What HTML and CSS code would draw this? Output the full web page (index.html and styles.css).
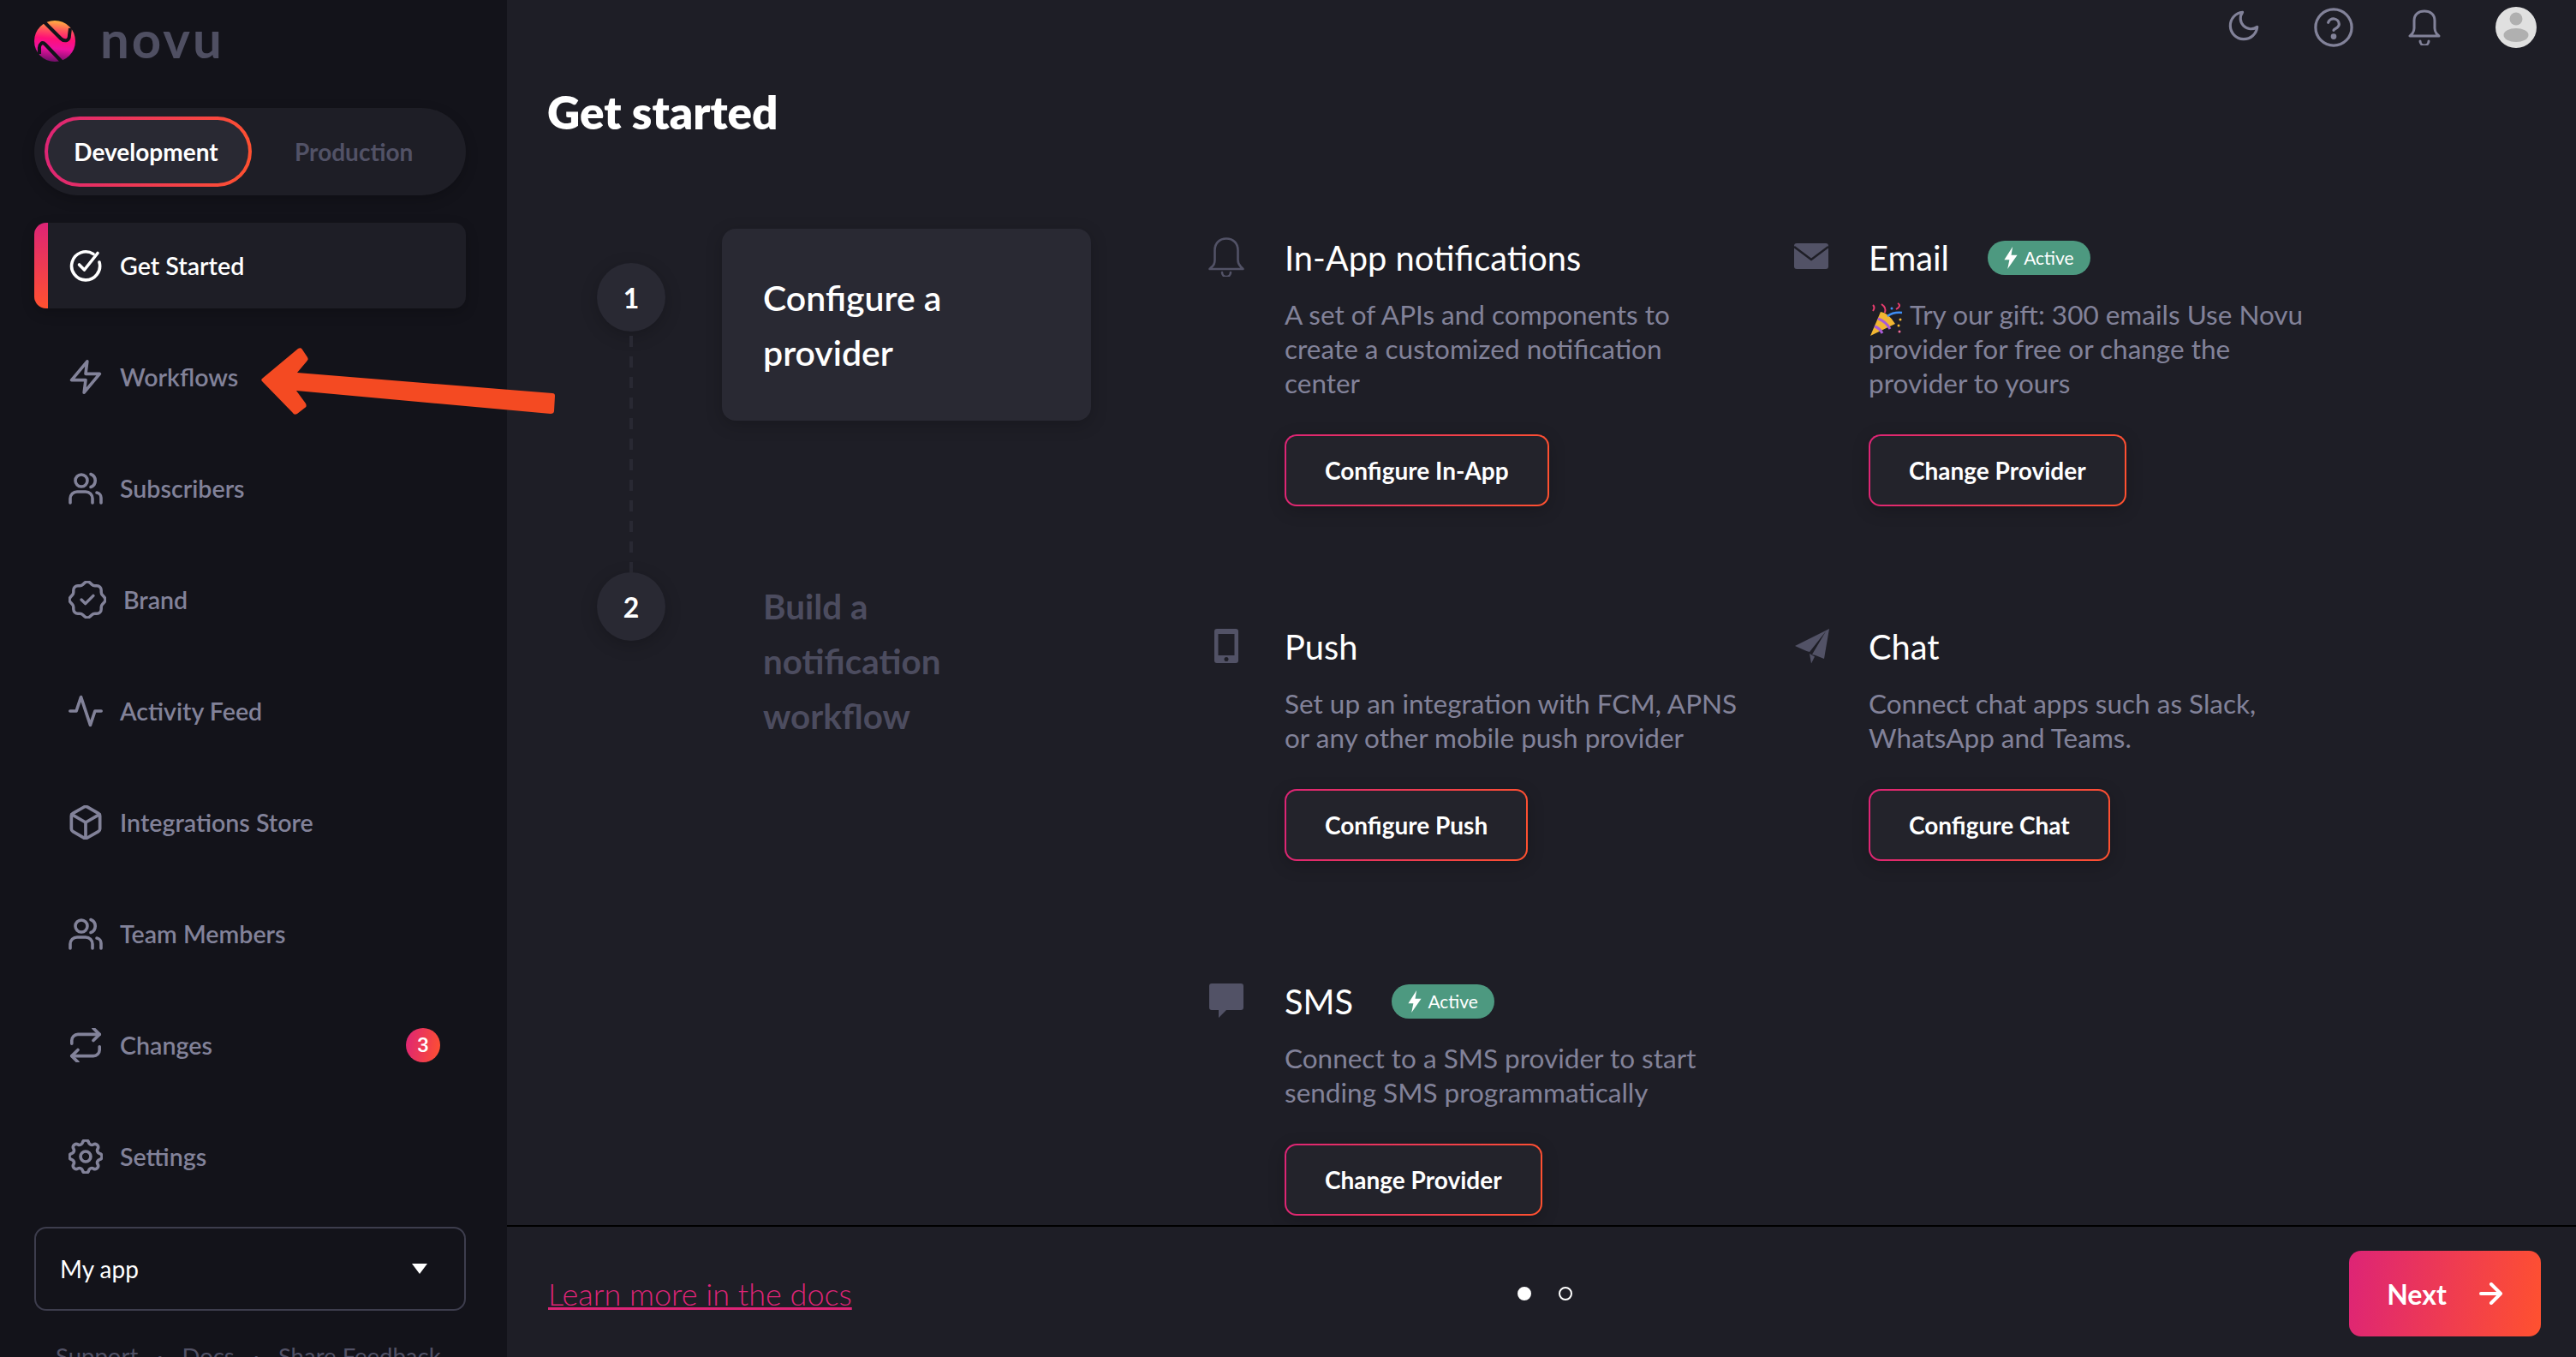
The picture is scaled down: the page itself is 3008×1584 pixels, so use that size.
FILE: index.html
```html
<!DOCTYPE html>
<html lang="en">
<head>
<meta charset="utf-8">
<title>Novu - Get started</title>
<link rel="stylesheet" href="styles.css">
</head>
<body>
<div class="app">
  <aside class="sidebar">
    <div class="brand">
      <svg class="logo" viewBox="0 0 48 48">
        <defs>
          <linearGradient id="lg" x1="0.55" y1="0" x2="0.45" y2="1">
            <stop offset="0" stop-color="#ffb33f"/><stop offset="0.22" stop-color="#ff5a5a"/><stop offset="0.45" stop-color="#ff0f78"/><stop offset="0.68" stop-color="#ee12a0"/><stop offset="1" stop-color="#6f0f68"/>
          </linearGradient>
        </defs>
        <circle cx="24" cy="24" r="24" fill="url(#lg)"/>
        <path d="M11 1L31 21Q34 24 38 23Q41 22 41 17L42 9" stroke="#13131a" stroke-width="4" fill="none"/>
        <path d="M32 48L13 28Q10 25 8 27Q5.500 29 6 33L6 39" stroke="#13131a" stroke-width="4" fill="none"/>
      </svg>
      <span class="wordmark">novu</span>
    </div>
    <div class="toggle">
      <span class="toggle-on">Development</span>
      <span class="toggle-off">Production</span>
    </div>
    <nav class="nav">
      <a class="nav-item current">
        <svg class="ic thick" viewBox="0 0 40 40"><path d="M29 6.500A16.500 16.500 0 1 0 36 16"/><path d="M12.500 19l6 6L34 5.500"/></svg>
        <span>Get Started</span>
      </a>
      <a class="nav-item">
        <svg class="ic" viewBox="1 1 22 22"><polygon points="13 2 3 14 12 14 11 22 21 10 12 10 13 2"/></svg>
        <span>Workflows</span>
      </a>
      <a class="nav-item">
        <svg class="ic thick" viewBox="0 0 40 40"><circle cx="15" cy="11" r="7"/><path d="M26 3.500a8 8 0 0 1 0 15"/><path d="M2 37v-5a8 8 0 0 1 8-8h10a8 8 0 0 1 8 8v5"/><path d="M33 25a6 6 0 0 1 5 6v6"/></svg>
        <span>Subscribers</span>
      </a>
      <a class="nav-item wide">
        <svg class="ic" viewBox="2.500 2.500 19 19"><path d="M5 7.200a2.200 2.200 0 0 1 2.200 -2.200h1a2.200 2.200 0 0 0 1.550 -.64l.7 -.7a2.200 2.200 0 0 1 3.100 0l.7 .7c.412 .41 .97 .64 1.550 .64h1a2.200 2.200 0 0 1 2.200 2.200v1c0 .58 .23 1.138 .64 1.550l.7 .7a2.200 2.200 0 0 1 0 3.100l-.7 .7a2.200 2.200 0 0 0 -.64 1.550v1a2.200 2.200 0 0 1 -2.200 2.200h-1a2.200 2.200 0 0 0 -1.550 .64l-.7 .7a2.200 2.200 0 0 1 -3.100 0l-.7 -.7a2.200 2.200 0 0 0 -1.550 -.64h-1a2.200 2.200 0 0 1 -2.200 -2.200v-1a2.200 2.200 0 0 0 -.64 -1.550l-.7 -.7a2.200 2.200 0 0 1 0 -3.100l.7 -.7a2.200 2.200 0 0 0 .64 -1.550v-1"/><path d="M9 12l2 2l4 -4"/></svg>
        <span>Brand</span>
      </a>
      <a class="nav-item">
        <svg class="ic" viewBox="1 1 22 22"><polyline points="22 12 18 12 15 21 9 3 6 12 2 12"/></svg>
        <span>Activity Feed</span>
      </a>
      <a class="nav-item">
        <svg class="ic" viewBox="1.200 1.200 21.600 21.600"><path d="M21 16V8a2 2 0 0 0-1-1.730l-7-4a2 2 0 0 0-2 0l-7 4A2 2 0 0 0 3 8v8a2 2 0 0 0 1 1.730l7 4a2 2 0 0 0 2 0l7-4A2 2 0 0 0 21 16z"/><polyline points="3.270 6.960 12 12.010 20.730 6.960"/><line x1="12" y1="22.080" x2="12" y2="12"/></svg>
        <span>Integrations Store</span>
      </a>
      <a class="nav-item">
        <svg class="ic thick" viewBox="0 0 40 40"><circle cx="15" cy="11" r="7"/><path d="M26 3.500a8 8 0 0 1 0 15"/><path d="M2 37v-5a8 8 0 0 1 8-8h10a8 8 0 0 1 8 8v5"/><path d="M33 25a6 6 0 0 1 5 6v6"/></svg>
        <span>Team Members</span>
      </a>
      <a class="nav-item">
        <svg class="ic" viewBox="0.900 0.900 22.200 22.200"><polyline points="17 1 21 5 17 9"/><path d="M3 11V9a4 4 0 0 1 4-4h14"/><polyline points="7 23 3 19 7 15"/><path d="M21 13v2a4 4 0 0 1-4 4H3"/></svg>
        <span>Changes</span>
        <b class="count">3</b>
      </a>
      <a class="nav-item">
        <svg class="ic" viewBox="2.600 2.600 18.800 18.800"><path d="M10.325 4.317c.426 -1.756 2.924 -1.756 3.350 0a1.724 1.724 0 0 0 2.573 1.066c1.543 -.94 3.310 .826 2.370 2.370a1.724 1.724 0 0 0 1.065 2.572c1.756 .426 1.756 2.924 0 3.350a1.724 1.724 0 0 0 -1.066 2.573c.94 1.543 -.826 3.310 -2.370 2.370a1.724 1.724 0 0 0 -2.572 1.065c-.426 1.756 -2.924 1.756 -3.350 0a1.724 1.724 0 0 0 -2.573 -1.066c-1.543 .94 -3.310 -.826 -2.370 -2.370a1.724 1.724 0 0 0 -1.065 -2.572c-1.756 -.426 -1.756 -2.924 0 -3.350a1.724 1.724 0 0 0 1.066 -2.573c-.94 -1.543 .826 -3.310 2.370 -2.370c1 .608 2.296 .07 2.572 -1.065"/><circle cx="12" cy="12" r="2.800"/></svg>
        <span>Settings</span>
      </a>
    </nav>
    <div class="select">
      <span>My app</span>
      <svg class="caret" viewBox="0 0 20 14"><path d="M1 1h18L10 13z"/></svg>
    </div>
    <div class="links">
      <span>Support</span><i>·</i><span>Docs</span><i>·</i><span>Share Feedback</span>
    </div>
  </aside>

  <main class="main">
    <div class="content">
      <header class="topbar">
        <svg class="top-ic moon" viewBox="0 0 24 24"><path d="M21 12.790A9 9 0 1 1 11.210 3 7 7 0 0 0 21 12.790z"/></svg>
        <svg class="top-ic help" viewBox="0 0 24 24"><circle cx="12" cy="12" r="11"/><path d="M8.700 9a3.400 3.400 0 0 1 6.600 1c0 2.200-3.300 3-3.300 3.700"/><circle class="dot" cx="12" cy="17.500" r="0.900"/></svg>
        <svg class="top-ic bell" viewBox="0 0 38 42"><path d="M2 31h34l-3-3c-1-1.500-2-3-2-6v-9C31 6 26 2 19 2S7 6 7 13v9c0 3-1 4.500-2 6z"/><path d="M14 37a5 5 0 0 0 10 0"/></svg>
        <svg class="avatar" viewBox="0 0 48 48"><circle cx="24" cy="24" r="24" fill="#e0e0e0"/><circle cx="24" cy="14" r="7.500" fill="#b0b0b0"/><ellipse cx="24" cy="33" rx="14.500" ry="8" fill="#b0b0b0"/></svg>
      </header>
      <h1 class="title">Get started</h1>
      <div class="body">
        <div class="rail">
          <div class="num">1</div>
          <div class="dash"></div>
          <div class="num">2</div>
        </div>
        <div class="steps">
          <div class="step-card">Configure a provider</div>
          <div class="step-next">Build a notification workflow</div>
        </div>
        <div class="channels">
          <section class="channel">
            <svg class="ch-ic" viewBox="0 0 44 48"><path class="line" d="M2.500 39h39l-2.500-2.500c-2-2-3.500-4-3.500-8V17C35.500 9 30 3.500 22 3.500S8.500 9 8.500 17v11.500c0 4.500-1.500 6.500-3.500 8z"/><path class="line" d="M17 43a5 5 0 0 0 10 0"/></svg>
            <div class="ch-text">
              <h2>In-App notifications</h2>
              <p>A set of APIs and components to create a customized notification center</p>
              <button class="ghost">Configure In-App</button>
            </div>
          </section>
          <section class="channel">
            <svg class="ch-ic" viewBox="0 0 44 48"><rect x="3" y="9" width="40" height="30" rx="3" class="fill"/><path d="M3 13l20 15 20-15" fill="none" stroke="#1e1e26" stroke-width="2.500"/></svg>
            <div class="ch-text">
              <h2>Email <span class="badge"><svg viewBox="0 0 14 24"><path d="M9 0L0 14h5.500L3.500 24 14 9H7.500z"/></svg>Active</span></h2>
              <p><svg class="party" viewBox="0 0 40 40"><path d="M1 39L13 11Q22 12 30 25z" fill="#f2b632"/><path d="M6 28Q12 30 15 36M10 19Q19 22 24 31" stroke="#a85bd6" stroke-width="3" fill="none"/><path d="M21 16Q28 11 38 12" stroke="#3f8ef5" stroke-width="2.500" fill="none"/><path d="M14 2Q20 6 18 12M33 1Q38 4 31 8M4 3Q7 6 4 10" stroke="#e63d6e" stroke-width="2" fill="none"/><circle cx="36" cy="20" r="1.500" fill="#f2b632"/><circle cx="35" cy="34" r="1.500" fill="#f06a9a"/><circle cx="26" cy="7" r="1.500" fill="#3f8ef5"/><circle cx="34" cy="27" r="1.500" fill="#f2b632"/></svg>Try our gift: 300 emails Use Novu provider for free or change the provider to yours</p>
              <button class="ghost">Change Provider</button>
            </div>
          </section>
          <section class="channel">
            <svg class="ch-ic" viewBox="0 0 44 48"><path class="fill" fill-rule="evenodd" d="M11 5h22a3 3 0 0 1 3 3v34a3 3 0 0 1-3 3H11a3 3 0 0 1-3-3V8a3 3 0 0 1 3-3zM12.500 11v25h19V11zM22 38a2.500 2.500 0 1 0 0 5 2.500 2.500 0 0 0 0-5z"/></svg>
            <div class="ch-text">
              <h2>Push</h2>
              <p>Set up an integration with FCM, APNS or any other mobile push provider</p>
              <button class="ghost">Configure Push</button>
            </div>
          </section>
          <section class="channel">
            <svg class="ch-ic" viewBox="0 0 44 48"><path class="fill" d="M44 5L38 40l-10-4-4-1 16-27-19 24-3.500-1L4 25z"/><path class="fill" d="M21 34l6 3.500-4 8z"/></svg>
            <div class="ch-text">
              <h2>Chat</h2>
              <p>Connect chat apps such as Slack, WhatsApp and Teams.</p>
              <button class="ghost">Configure Chat</button>
            </div>
          </section>
          <section class="channel">
            <svg class="ch-ic" viewBox="0 0 44 48"><path class="fill" d="M5 5h34a3 3 0 0 1 3 3v25a3 3 0 0 1-3 3H22l-9 9v-9H5a3 3 0 0 1-3-3V8a3 3 0 0 1 3-3z"/></svg>
            <div class="ch-text">
              <h2>SMS <span class="badge"><svg viewBox="0 0 14 24"><path d="M9 0L0 14h5.500L3.500 24 14 9H7.500z"/></svg>Active</span></h2>
              <p>Connect to a SMS provider to start sending SMS programmatically</p>
              <button class="ghost">Change Provider</button>
            </div>
          </section>
        </div>
      </div>
    </div>
    <footer class="footer">
      <a class="docs">Learn more in the docs</a>
      <div class="dots"><span class="on"></span><span></span></div>
      <button class="next">Next <svg viewBox="0 0 28 26"><path d="M2 13h23M14 2l11 11-11 11"/></svg></button>
    </footer>
  </main>
</div>
<svg class="pointer" viewBox="0 0 344 78">
  <path d="M1 36L43 1c2-1 4-1 5 1l6 9c1 2 1 3-1 5L42 29 340 53c2 0 3 1 3 3l-1 18c0 2-2 3-4 3L41 50l11 15c1 2 1 4-1 5l-9 7c-2 1-4 1-5-1L1 39c-1-1-1-2 0-3z" fill="#f44a22"/>
</svg>
</body>
</html>
```

FILE: styles.css
```css
* { box-sizing: border-box; }
html, body { margin: 0; height: 100%; }
body {
  width: 3008px;
  height: 1584px;
  overflow: hidden;
  position: relative;
  font-family: Lato, "Liberation Sans", sans-serif;
  background: #1e1e26;
  color: #fff;
}
.app { display: flex; height: 1584px; }

/* sidebar */
.sidebar {
  width: 592px;
  flex: none;
  height: 1584px;
  overflow: hidden;
  background: #13131a;
  padding: 24px 48px 0 40px;
}
.brand { display: flex; align-items: center; height: 48px; gap: 29px; }
.logo { width: 48px; height: 48px; flex: none; }
.wordmark {
  font-size: 60px;
  line-height: 48px;
  font-weight: 700;
  color: #4f4f62;
  letter-spacing: 3px;
  position: relative;
  top: -3px;
}
.toggle {
  margin-top: 54px;
  height: 102px;
  border-radius: 51px;
  background: #1e1e26;
  padding: 12px;
  display: flex;
  align-items: center;
  font-size: 28px;
  font-weight: 700;
  box-shadow: 0 5px 15px rgba(0, 0, 0, .2);
}
.toggle-on {
  width: 242px;
  height: 82px;
  border-radius: 41px;
  border: 4px solid transparent;
  padding-right: 5px;
  background: linear-gradient(#292933, #292933) padding-box, linear-gradient(99deg, #dd2476, #ff512f) border-box;
  display: flex;
  align-items: center;
  justify-content: center;
}
.toggle-off { margin-left: 50px; color: #525266; }
.nav { margin-top: 32px; display: flex; flex-direction: column; gap: 30px; }
.nav-item {
  position: relative;
  height: 100px;
  border-radius: 14px;
  padding-left: 40px;
  display: flex;
  align-items: center;
  gap: 20px;
  color: #828299;
  font-size: 28.600px;
  font-weight: 600;
  overflow: hidden;
}
.nav-item.current {
  background: #1e1e26;
  color: #fff;
  box-shadow: 0 5px 15px rgba(0, 0, 0, .2);
}
.nav-item.current::before {
  content: "";
  position: absolute;
  left: 0; top: 0; bottom: 0;
  width: 16px;
  background: linear-gradient(180deg, #dd2476, #ff512f);
}
.ic {
  width: 40px; height: 40px; flex: none;
  fill: none;
  stroke: currentColor;
  stroke-width: 2;
  stroke-linecap: round;
  stroke-linejoin: round;
}
.nav-item .ic.thick { stroke-width: 3.600; }
.nav-item.wide .ic { width: 44px; height: 44px; stroke-width: 1.500; }
.nav-item:last-child .ic { stroke-width: 1.700; }
.count {
  margin-left: auto;
  margin-right: 30px;
  width: 40px; height: 40px;
  border-radius: 50%;
  background: linear-gradient(99deg, #dd2476, #ff512f);
  display: flex; align-items: center; justify-content: center;
  color: #fff;
  font-family: Roboto, sans-serif;
  font-size: 24px;
  font-weight: 500;
}
.select {
  margin-top: 32px;
  height: 98px;
  border: 2px solid #3d3d4d;
  border-radius: 14px;
  padding: 0 42px 0 28px;
  display: flex;
  align-items: center;
  justify-content: space-between;
  font-size: 28px;
}
.caret { width: 20px; height: 14px; fill: #fff; }
.links {
  margin-top: 36px;
  padding-left: 25px;
  display: flex;
  gap: 22px;
  font-size: 27.500px;
  line-height: 34px;
  color: #525266;
  white-space: nowrap;
}
.links i { font-style: normal; }

/* main */
.main { flex: 1; min-width: 0; display: flex; flex-direction: column; height: 1584px; }
.content { height: 1432px; border-bottom: 2px solid #000; overflow: hidden; padding-left: 48px; }
.topbar {
  height: 64px;
  display: flex;
  justify-content: flex-end;
  align-items: center;
  gap: 64px;
  padding-right: 46px;
}
.top-ic { fill: none; stroke: #828299; stroke-linecap: round; stroke-linejoin: round; flex: none; }
.top-ic.moon { width: 42px; height: 42px; stroke-width: 1.800; margin: -4px -3px 0; }
.top-ic.help { width: 46px; height: 46px; stroke-width: 1.700; }
.top-ic.help .dot { fill: #828299; }
.top-ic.bell { width: 38px; height: 42px; stroke-width: 3; }
.avatar { width: 48px; height: 48px; flex: none; }
.title {
  margin: 35px 0 0 -1px;
  font-size: 53px;
  line-height: 64px;
  font-weight: 800;
}
.body { margin-top: 104px; margin-left: 1px; display: flex; align-items: flex-start; }
.rail { margin-left: 56px; padding-top: 40px; width: 80px; flex: none; }
.num {
  width: 80px; height: 80px;
  border-radius: 50%;
  background: #292933;
  display: flex; align-items: center; justify-content: center;
  font-size: 32px;
  font-weight: 700;
  box-shadow: 0 5px 20px rgba(0, 0, 0, .2);
}
.dash {
  width: 4px;
  height: 276px;
  margin: 5px 0 0 38px;
  background: repeating-linear-gradient(180deg, #292933 0 13px, transparent 13px 24px);
}
.steps { margin-left: 66px; width: 431px; flex: none; font-size: 40.400px; line-height: 64px; font-weight: 700; }
.step-card {
  height: 224px;
  padding: 49px 100px 0 48px;
  border-radius: 16px;
  background: #292933;
  font-size: 41px;
  font-weight: 600;
  box-shadow: 0 5px 20px rgba(0, 0, 0, .2);
}
.step-next { margin-top: 185px; padding: 0 100px 0 48px; color: #4c4c5f; }
.channels {
  margin: 4px 0 0 136px;
  display: grid;
  grid-template-columns: 682px 681px;
  row-gap: 134px;
}
.channel { display: flex; }
.ch-ic { width: 44px; height: 48px; flex: none; margin: 4px 46px 0 0; }
.ch-ic .fill { fill: #525266; }
.ch-ic .line { fill: none; stroke: #525266; stroke-width: 2.600; stroke-linejoin: round; stroke-linecap: round; }
.ch-text { width: 530px; }
.ch-text h2 {
  margin: 0;
  font-size: 39.800px;
  line-height: 60px;
  font-weight: 400;
  display: flex;
  align-items: center;
  gap: 45px;
}
.badge {
  height: 40px;
  width: 120px;
  border-radius: 20px;
  background: #4d9980;
  font-size: 21px;
  font-weight: 400;
  display: flex;
  align-items: center;
  justify-content: center;
  gap: 7px;
}
.badge svg { width: 16px; height: 26px; fill: #fff; }
.ch-text p {
  margin: 16px 0 0;
  font-size: 31.500px;
  line-height: 40px;
  color: #828299;
  font-weight: 400;
}
.party { width: 42px; height: 40px; margin: -10px 6px -10px 0; vertical-align: -4px; }
.ghost {
  margin-top: 40px;
  height: 84px;
  display: block;
  padding: 0 45px;
  border: 2px solid transparent;
  border-radius: 14px;
  background: linear-gradient(#23232b, #23232b) padding-box, linear-gradient(99deg, #dd2476, #ff512f) border-box;
  color: #fff;
  font-family: inherit;
  font-size: 28px;
  font-weight: 700;
  box-shadow: 0 5px 20px rgba(0, 0, 0, .2);
}

/* footer */
.footer {
  height: 152px;
  padding: 4px 41px 0 48px;
  display: grid;
  grid-template-columns: 1fr auto 1fr;
  align-items: center;
}
.docs { font-size: 36px; color: #dd2476; text-decoration: underline; text-decoration-thickness: 3px; font-weight: 300; }
.dots { display: flex; gap: 32px; }
.dots span { width: 16px; height: 16px; border-radius: 50%; border: 2px solid #fff; }
.dots .on { background: #fff; }
.next {
  justify-self: end;
  width: 224px;
  height: 100px;
  border: 0;
  border-radius: 14px;
  background: linear-gradient(99deg, #dd2476, #ff512f);
  color: #fff;
  font-family: inherit;
  font-size: 32px;
  font-weight: 700;
  display: flex;
  align-items: center;
  justify-content: center;
  gap: 38px;
}
.next svg { width: 28px; height: 26px; fill: none; stroke: #fff; stroke-width: 4; stroke-linecap: round; stroke-linejoin: round; }

/* annotation drawn over the screenshot */
.pointer { position: absolute; left: 305px; top: 406px; width: 344px; height: 78px; }
```
